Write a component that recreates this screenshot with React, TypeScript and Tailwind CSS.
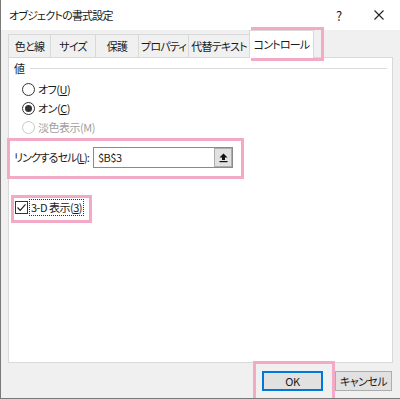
import React from "react";

const tabs = [
  { label: "色と線", w: 43 },
  { label: "サイズ", w: 46 },
  { label: "保護", w: 44 },
  { label: "プロパティ", w: 51 },
  { label: "代替テキスト", w: 62 },
];

function Radio({ label, checked, disabled }: { label: React.ReactNode; checked?: boolean; disabled?: boolean }) {
  return (
    <div className={`flex h-[19px] items-center gap-[3px] ${disabled ? "text-[#a0a0a0]" : "text-[#1a1a1a]"}`}>
      <span
        className={`flex h-[13px] w-[13px] items-center justify-center rounded-full border bg-white ${
          disabled ? "border-[#c8c8c8]" : "border-[#333]"
        }`}
      >
        {checked && <span className="h-[7px] w-[7px] rounded-full bg-[#333]" />}
      </span>
      <span>{label}</span>
    </div>
  );
}

export default function App() {
  return (
    <div className="relative h-[399px] w-[400px] overflow-hidden whitespace-nowrap border-b border-l border-[#7a7a7a] bg-[#f0f0f0] font-['Noto_Sans_CJK_JP','Noto_Sans',sans-serif] text-[11px] leading-none tracking-[-0.5px] text-[#1a1a1a] [font-feature-settings:'palt']">
      {/* title bar */}
      <div className="flex h-[30px] items-center bg-white pl-[8px]">
        <span className="flex-1 tracking-[-0.8px]">オブジェクトの書式設定</span>
        <span className="w-[38px] text-[13px]">?</span>
        <svg width="10" height="10" viewBox="0 0 10 10" className="mr-[16px]">
          <path d="M0.5 0.5 L9.5 9.5 M9.5 0.5 L0.5 9.5" stroke="#222" strokeWidth="1.1" />
        </svg>
      </div>

      {/* tabs */}
      <div className="flex h-[27px] items-end pl-[7px] tracking-[-0.8px]">
        {tabs.map((t) => (
          <div
            key={t.label}
            style={{ width: t.w }}
            className="-mr-px flex h-[23px] items-center justify-center border border-b-0 border-[#d9d9d9] bg-[#f0f0f0]"
          >
            {t.label}
          </div>
        ))}
        <div className="relative z-10 -mb-px flex h-[28px] w-[65px] items-center justify-center border border-b-0 border-[#d9d9d9] bg-white">
          コントロール
        </div>
      </div>

      {/* panel */}
      <div className="mx-[7px] h-[306px] border border-[#d9d9d9] bg-white px-[5px] pt-[3px]">
        <div className="flex h-[14px] items-center gap-[5px]">
          <span>値</span>
          <span className="h-px flex-1 bg-[#dcdcdc]" />
        </div>
        <div className="mt-[5px] flex flex-col pl-[8px]">
          <Radio
            label={
              <>
                オフ(<span className="underline">U</span>)
              </>
            }
          />
          <Radio
            checked
            label={
              <>
                オン(<span className="underline">C</span>)
              </>
            }
          />
          <Radio disabled label="淡色表示(M)" />
        </div>

        <div className="mt-[10px] flex items-center">
          <span className="w-[79px] tracking-[-1px]">
            リンクするセル(<span className="underline">L</span>):
          </span>
          <div className="flex h-[21px] w-[140px] items-center border border-[#8a8a8a] bg-white pl-[4px]">
            <span className="flex-1">$B$3</span>
            <div className="flex h-[19px] w-[18px] items-center justify-center border border-[#adadad] bg-[#e1e1e1]">
              <svg width="9" height="10" viewBox="0 0 9 10">
                <path d="M4.5 0.5 L8.5 4.5 L6 4.5 L6 7 L3 7 L3 4.5 L0.5 4.5 Z" fill="#111" />
                <rect x="0.5" y="8" width="8" height="1.2" fill="#111" />
              </svg>
            </div>
          </div>
        </div>

        <div className="mt-[31px] flex items-center gap-[1px] pl-[1px]">
          <span className="flex h-[13px] w-[13px] items-center justify-center border border-[#333] bg-white">
            <svg width="11" height="11" viewBox="0 0 11 11">
              <path d="M1.5 5.5 L4.2 8.3 L9.5 2.3" fill="none" stroke="#222" strokeWidth="1.2" />
            </svg>
          </span>
          <span className="border border-dotted border-[#333] px-[1px] py-[2px]">
            3-D 表示(<span className="underline">3</span>)
          </span>
        </div>
      </div>

      {/* buttons */}
      <div className="mt-[8px] flex justify-end gap-[12px] pr-[8px]">
        <button className="flex h-[20px] w-[61px] items-center justify-center border-2 border-[#0078d7] bg-[#e1e1e1]">
          OK
        </button>
        <button className="flex h-[20px] w-[57px] items-center justify-center border border-[#adadad] bg-[#e1e1e1]">
          キャンセル
        </button>
      </div>

      {/* annotation highlights */}
      <div className="pointer-events-none absolute left-[250px] top-[27px] h-[34px] w-[73px] border-[3px] border-[#f3aac6]" />
      <div className="pointer-events-none absolute left-[6px] top-[138px] h-[41px] w-[237px] border-[3px] border-[#f3aac6]" />
      <div className="pointer-events-none absolute left-[10px] top-[195px] h-[28px] w-[81px] border-[3px] border-[#f3aac6]" />
      <div className="pointer-events-none absolute left-[252px] top-[361px] h-[40px] w-[82px] border-[3px] border-[#f3aac6]" />
    </div>
  );
}
